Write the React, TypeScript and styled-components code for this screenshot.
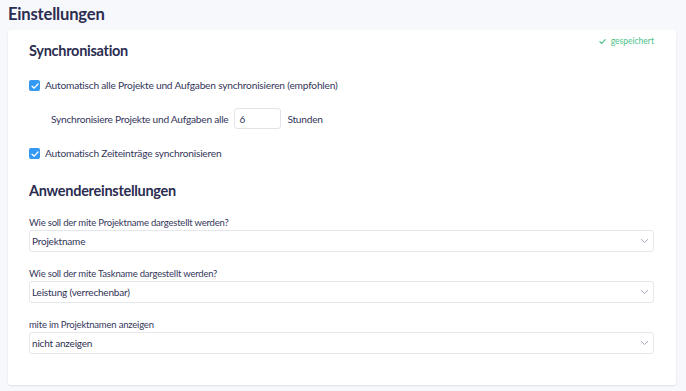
import styled, { createGlobalStyle } from "styled-components";

const GlobalStyle = createGlobalStyle`
  html, body {
    margin: 0;
    padding: 0;
    background: #f7f8fb;
  }
  body {
    font-family: Lato, "Open Sans", sans-serif;
    color: #35375b;
  }
`;

const Page = styled.div`
  padding: 4px 10px 8px 8px;
`;

const PageTitle = styled.h1`
  margin: 0 0 6px;
  font-size: 16.6px;
  line-height: 20px;
  font-weight: 700;
  letter-spacing: -0.2px;
  color: #2b2d50;
`;

const Card = styled.div`
  position: relative;
  background: #fff;
  border-radius: 3px;
  box-shadow: 0 1px 2px rgba(40, 45, 80, 0.12);
  padding: 11px 22px 31px 21px;
`;

const Saved = styled.div`
  position: absolute;
  top: 5px;
  right: 22px;
  display: flex;
  align-items: center;
  gap: 4px;
  font-size: 8.5px;
  line-height: 12px;
  color: #4cc38a;
`;

const SectionTitle = styled.h2<{ $top?: number }>`
  margin: ${({ $top }) => $top ?? 0}px 0 0;
  font-size: 14.5px;
  line-height: 20px;
  font-weight: 700;
  letter-spacing: -0.28px;
  color: #2b2d50;
`;

const CheckRow = styled.label<{ $top: number }>`
  display: flex;
  align-items: center;
  gap: 5px;
  margin-top: ${({ $top }) => $top}px;
  font-size: 10.2px;
  line-height: 13px;
  letter-spacing: -0.22px;
`;

const Box = styled.span`
  width: 11px;
  height: 11px;
  border-radius: 2px;
  background: #3399f3;
  display: flex;
  align-items: center;
  justify-content: center;
`;

const IntervalRow = styled.div`
  display: flex;
  align-items: center;
  gap: 6px;
  margin: 16px 0 0 22px;
  font-size: 10.2px;
  letter-spacing: -0.26px;
`;

const NumberInput = styled.div`
  width: 47px;
  height: 21px;
  box-sizing: border-box;
  border: 1px solid #e3e4ea;
  border-radius: 3px;
  padding: 0 4px;
  display: flex;
  align-items: center;
  font-size: 10px;
`;

const Field = styled.div`
  margin-top: 16px;
`;

const FieldLabel = styled.div`
  font-size: 9.5px;
  line-height: 12px;
  letter-spacing: -0.2px;
  margin-bottom: 1px;
`;

const Select = styled.div`
  height: 22px;
  box-sizing: border-box;
  border: 1px solid #e6e7ec;
  border-radius: 3px;
  padding: 0 4px 0 2px;
  display: flex;
  align-items: center;
  justify-content: space-between;
  font-size: 10px;
  letter-spacing: -0.2px;
  color: #2f3154;
`;

const Check = ({ color, size }: { color: string; size: number }) => (
  <svg width={size} height={size} viewBox="0 0 12 12" fill="none">
    <path d="M2.5 6.2 L5 8.6 L9.6 3.6" stroke={color} strokeWidth="1.6" strokeLinecap="round" strokeLinejoin="round" />
  </svg>
);

const Chevron = () => (
  <svg width="9" height="6" viewBox="0 0 9 6" fill="none">
    <path d="M1 1.2 L4.5 4.5 L8 1.2" stroke="#a9abc2" strokeWidth="1" />
  </svg>
);

const fields = [
  { label: "Wie soll der mite Projektname dargestellt werden?", value: "Projektname" },
  { label: "Wie soll der mite Taskname dargestellt werden?", value: "Leistung (verrechenbar)" },
  { label: "mite im Projektnamen anzeigen", value: "nicht anzeigen" },
];

export default function App() {
  return (
    <Page>
      <GlobalStyle />
      <PageTitle>Einstellungen</PageTitle>
      <Card>
        <Saved>
          <Check color="#4cc38a" size={9} />
          gespeichert
        </Saved>
        <SectionTitle>Synchronisation</SectionTitle>
        <CheckRow $top={18}>
          <Box>
            <Check color="#fff" size={10} />
          </Box>
          Automatisch alle Projekte und Aufgaben synchronisieren (empfohlen)
        </CheckRow>
        <IntervalRow>
          Synchronisiere Projekte und Aufgaben alle
          <NumberInput>6</NumberInput>
          Stunden
        </IntervalRow>
        <CheckRow $top={18}>
          <Box>
            <Check color="#fff" size={10} />
          </Box>
          Automatisch Zeiteinträge synchronisieren
        </CheckRow>
        <SectionTitle $top={21}>Anwendereinstellungen</SectionTitle>
        {fields.map((f) => (
          <Field key={f.label}>
            <FieldLabel>{f.label}</FieldLabel>
            <Select>
              {f.value}
              <Chevron />
            </Select>
          </Field>
        ))}
      </Card>
    </Page>
  );
}
